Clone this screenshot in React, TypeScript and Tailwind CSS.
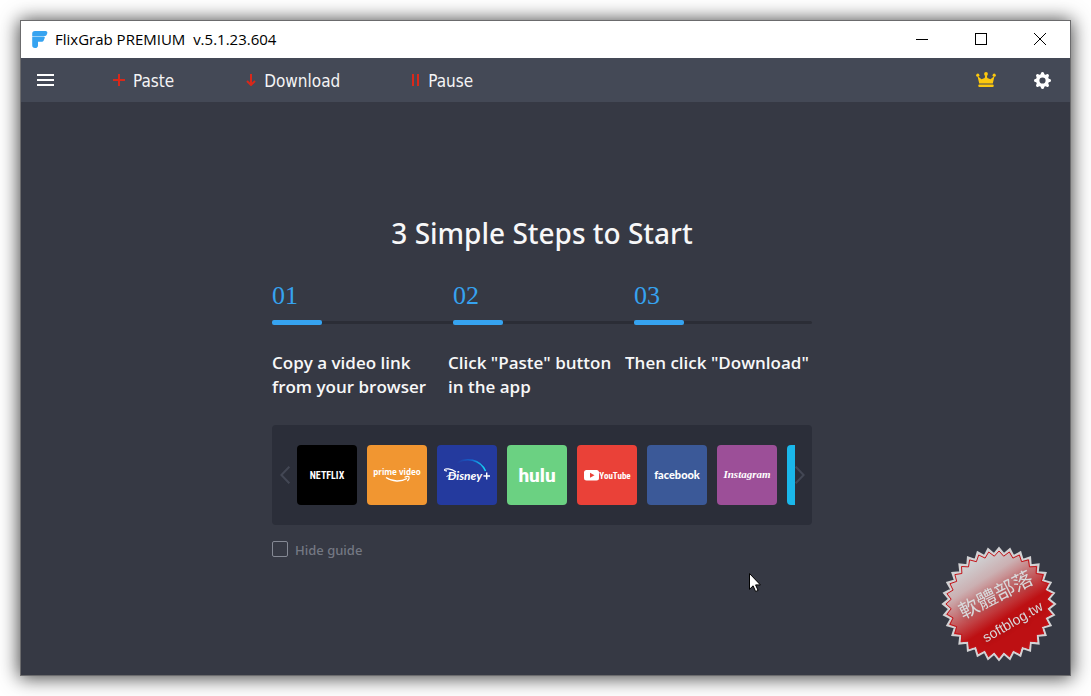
import { useState } from "react";
import type { ReactNode } from "react";
import { BsGearFill } from "react-icons/bs";

const steps = [
  { number: "01", text: "Copy a video link from your browser" },
  { number: "02", text: 'Click "Paste" button in the app' },
  { number: "03", text: 'Then click "Download"' },
];

function AppLogo() {
  return (
    <svg width="16" height="17" viewBox="0 0 16 17" fill="#36a3f0">
      <path d="M3 0h10.500a1.800 1.800 0 0 1 1.700 2.500l-.5 1.300A2 2 0 0 1 12.800 5H.2V2.800A2.800 2.800 0 0 1 3 0z" />
      <path d="M.2 5.500h11.300a1.200 1.200 0 0 1 1.100 1.700l-.9 2.300a2 2 0 0 1-1.800 1.200H6v3.100A3 3 0 0 1 3 17 2.900 2.900 0 0 1 .2 14z" />
    </svg>
  );
}

function CrownIcon() {
  return (
    <svg width="20" height="16" viewBox="0 0 20 16" fill="#fcc80e">
      <circle cx="1.800" cy="3.200" r="1.600" />
      <circle cx="10" cy="2" r="1.900" />
      <circle cx="18.200" cy="3.200" r="1.600" />
      <path d="M1.500 4 5.500 7.200 8.700 6 9.300 3h1.400l.6 3 3.200 1.200 4-3.200L16.800 11.500H3.200z" />
      <rect x="2.300" y="12.500" width="15.400" height="2.500" rx="1" />
    </svg>
  );
}

function Chevron({ left }: { left?: boolean }) {
  return (
    <svg width="10" height="18" viewBox="0 0 10 18" fill="none" stroke="#434754" strokeWidth="2">
      <path d={left ? "M9.300.7 1.400 9l7.900 8.300" : "M.7.700 8.600 9 .7 17.300"} />
    </svg>
  );
}

function Tile({ label, className, children }: { label: string; className: string; children?: ReactNode }) {
  return (
    <a href="#" aria-label={label} className={`block size-[60px] shrink-0 overflow-hidden rounded ${className}`}>
      <svg width="60" height="60" viewBox="0 0 60 60" fill="#fff" textAnchor="middle">
        {children}
      </svg>
    </a>
  );
}

function Services() {
  return (
    <div className="flex min-w-0 flex-1 gap-[10px] overflow-hidden">
      <Tile label="Netflix" className="bg-black">
        <text x="30" y="34" fontSize="10" fontWeight="700" fontFamily="'Roboto Condensed', Roboto, sans-serif">
          NETFLIX
        </text>
      </Tile>
      <Tile label="Prime Video" className="bg-[#f19631]">
        <text x="30" y="30" fontSize="8" fontWeight="700" fontFamily="'Noto Sans', sans-serif">
          prime video
        </text>
        <path d="M19 32.500c6.500 4.500 15 4.500 21 1" fill="none" stroke="#fff" strokeWidth="1.400" />
        <path d="M37.500 32.200c2-.8 4.300-.9 4.600-.2.300.8-.5 2.700-1.700 4" fill="none" stroke="#fff" strokeWidth="1.200" />
      </Tile>
      <Tile label="Disney+" className="bg-[#243a9e]">
        <defs>
          <linearGradient id="disneyArc" x1="0" x2="1">
            <stop offset="0" stopColor="#243a9e" />
            <stop offset="0.500" stopColor="#1263cf" />
            <stop offset="1" stopColor="#15dcf5" />
          </linearGradient>
        </defs>
        <path d="M20 18c9-6 23-4 28.500 8" fill="none" stroke="url(#disneyArc)" strokeWidth="1.500" />
        <path d="M19 27c-5-3.500-11.500-4-11.500-2 0 .8 1.500 1 2.500.8" fill="none" stroke="#fff" strokeWidth="1.200" />
        <path d="M9.500 31.500c2-1.600 8-1.800 10-.6" fill="none" stroke="#fff" strokeWidth="1" />
        <text x="28" y="35" fontSize="12" fontWeight="700" fontStyle="italic" fontFamily="Lato, sans-serif">
          Disney
        </text>
        <path d="M49.700 27.500v7M46.500 31h6.500" fill="none" stroke="#fff" strokeWidth="1.400" />
      </Tile>
      <Tile label="Hulu" className="bg-[#6bd182]">
        <text x="30" y="37" fontSize="19" fontWeight="800" fontFamily="Roboto, sans-serif">
          hulu
        </text>
      </Tile>
      <Tile label="YouTube" className="bg-[#ea4138]">
        <rect x="7" y="25" width="15" height="10.500" rx="2.500" />
        <path d="m13 27.800 4.500 2.500-4.500 2.500z" fill="#ea4138" />
        <text x="38" y="34" fontSize="9" fontWeight="700" fontFamily="'Roboto Condensed', Roboto, sans-serif">
          YouTube
        </text>
      </Tile>
      <Tile label="Facebook" className="bg-[#3b5998]">
        <text x="30" y="34" fontSize="11" fontWeight="900" fontFamily="Lato, sans-serif">
          facebook
        </text>
      </Tile>
      <Tile label="Instagram" className="bg-[#9c4f98]">
        <text x="30" y="33" fontSize="11" fontWeight="700" fontStyle="italic" fontFamily="'Liberation Serif', serif">
          Instagram
        </text>
      </Tile>
      <Tile label="Vimeo" className="bg-[#1ab7ea]" />
    </div>
  );
}

// 32-tooth outline around the centre of the seal
function sealPoints(outer: number, inner: number) {
  return Array.from({ length: 64 }, (_, i) => {
    const r = i % 2 === 0 ? outer : inner;
    const a = (i * Math.PI) / 32 - Math.PI / 2;
    return `${(58 + r * Math.cos(a)).toFixed(1)},${(58 + r * Math.sin(a)).toFixed(1)}`;
  }).join(" ");
}

function Seal() {
  return (
    <svg className="absolute right-[13px] bottom-[13px]" width="116" height="116" viewBox="0 0 116 116">
      <defs>
        <linearGradient id="seal" x1="0.180" y1="0.100" x2="0.560" y2="0.700">
          <stop offset="0.100" stopColor="#cfcfd1" />
          <stop offset="0.350" stopColor="#cbb0b2" />
          <stop offset="0.900" stopColor="#bd1013" />
        </linearGradient>
      </defs>
      <polygon points={sealPoints(56, 50)} fill="url(#seal)" stroke="#d2d2d4" strokeWidth="2" />
      <polygon points={sealPoints(53, 48)} fill="none" stroke="#c4151a" strokeWidth="1" />
      <g fill="#d9d9db" textAnchor="middle" className="drop-shadow-sm">
        <text transform="translate(58 55) rotate(-27)" fontSize="20" fontFamily="'Noto Sans CJK TC', sans-serif">
          軟體部落
        </text>
        <text transform="translate(74 80) rotate(-30)" fontSize="14" fontFamily="'Liberation Sans', sans-serif">
          softblog.tw
        </text>
      </g>
    </svg>
  );
}

export default function App() {
  const [hideGuide, setHideGuide] = useState(false);

  return (
    <div className="flex h-screen bg-white p-5 font-['Noto_Sans',sans-serif]">
      <div className="relative flex flex-1 flex-col border border-[#6b6b6d] bg-[#363944] shadow-[0_1px_18px_1px_rgba(0,0,0,0.75)]">
        <header className="flex h-[37px] items-center bg-white pr-px pb-px pl-[11px] text-black">
          <AppLogo />
          <h1 className="ml-[7px] flex-1 font-['Open_Sans',sans-serif] text-[15px] whitespace-pre">FlixGrab PREMIUM  v.5.1.23.604</h1>
          <button aria-label="Minimize" className="flex h-full w-[59px] items-center justify-center">
            <span className="h-px w-3 bg-black" />
          </button>
          <button aria-label="Maximize" className="flex h-full w-[59px] items-center justify-center">
            <span className="size-3 border border-black" />
          </button>
          <button aria-label="Close" className="flex h-full w-[59px] items-center justify-center">
            <svg width="12" height="12" viewBox="0 0 12 12" stroke="#000">
              <path d="M0 0 12 12M12 0 0 12" />
            </svg>
          </button>
        </header>

        <nav className="flex h-11 items-center bg-[#444956] pr-[19px] pl-4 font-['DejaVu_Sans_Condensed','DejaVu_Sans',sans-serif] text-[17px] text-[#f4f4f5]">
          <button aria-label="Menu" className="flex w-[17px] flex-col gap-[3px]">
            <span className="h-[2px] bg-white" />
            <span className="h-[2px] bg-white" />
            <span className="h-[2px] bg-white" />
          </button>
          <button className="ml-[59px] flex items-center gap-2">
            <svg width="12" height="12" viewBox="0 0 12 12" stroke="#d9281a" strokeWidth="2">
              <path d="M6 0v12M0 6h12" />
            </svg>
            <span className="pt-1">Paste</span>
          </button>
          <button className="ml-[72px] flex items-center gap-2">
            <svg width="10" height="12" viewBox="0 0 10 12" fill="none" stroke="#d9281a" strokeWidth="2">
              <path d="M5 0v11M1 7l4 4 4-4" />
            </svg>
            <span className="pt-1">Download</span>
          </button>
          <button className="ml-[72px] flex items-center gap-2">
            <svg width="8" height="12" viewBox="0 0 8 12" fill="#d9281a">
              <path d="M0 0h2v12H0zM5 0h2v12H5z" />
            </svg>
            <span className="pt-1">Pause</span>
          </button>
          <button aria-label="Premium" className="ml-auto">
            <CrownIcon />
          </button>
          <button aria-label="Settings" className="ml-[38px]">
            <BsGearFill size={17} color="#fff" />
          </button>
        </nav>

        <main className="flex flex-1 flex-col items-center pt-[110px] pr-[7px] text-[#f7f7f8]">
          <h2 className="text-[28px] leading-[42px] font-medium">3 Simple Steps to Start</h2>

          <section className="mt-[26px] w-full max-w-[540px]">
            <div className="grid grid-cols-3 gap-x-[3px] font-['Liberation_Serif',serif] text-[26px] leading-8 text-[#36a3f0]">
              {steps.map((step) => (
                <span key={step.number}>{step.number}</span>
              ))}
            </div>
            <div className="relative mt-2 grid grid-cols-3 gap-x-[3px]">
              <div className="absolute inset-x-0 top-px h-[3px] rounded bg-[#2b2d36]" />
              {steps.map((step) => (
                <div key={step.number} className="relative h-[5px] w-[50px] rounded-xs bg-[#36a3f0]" />
              ))}
            </div>
            <div className="mt-[26px] grid grid-cols-[176px_177px_1fr] font-['Open_Sans',sans-serif] text-[17px] leading-6 font-semibold">
              {steps.map((step) => (
                <p key={step.number} className="pr-1 last:pr-0 last:whitespace-nowrap">
                  {step.text}
                </p>
              ))}
            </div>

            <div className="mt-[26px] flex h-[100px] items-center rounded bg-[#2b2e39] pr-[7px] pl-2">
              <button aria-label="Previous" className="mr-[7px]">
                <Chevron left />
              </button>
              <Services />
              <button aria-label="Next">
                <Chevron />
              </button>
            </div>

            <label className="mt-[14px] flex items-center gap-[7px] text-[13px] leading-[18px] font-medium text-[#747883]">
              <input
                type="checkbox"
                checked={hideGuide}
                onChange={(e) => setHideGuide(e.target.checked)}
                className="size-4 appearance-none rounded-xs border border-[#858994] checked:bg-[#36a3f0]"
              />
              <span className="pt-[2px]">Hide guide</span>
            </label>
          </section>
        </main>

        <Seal />

        <svg className="absolute top-[552px] left-[728px]" width="12" height="20" viewBox="0 0 12 20" fill="#fff" stroke="#000">
          <path d="M.5.500v15.800l3.600-3.500 2.500 5.700 2.500-1.100-2.500-5.500h4.800z" />
        </svg>
      </div>
    </div>
  );
}
